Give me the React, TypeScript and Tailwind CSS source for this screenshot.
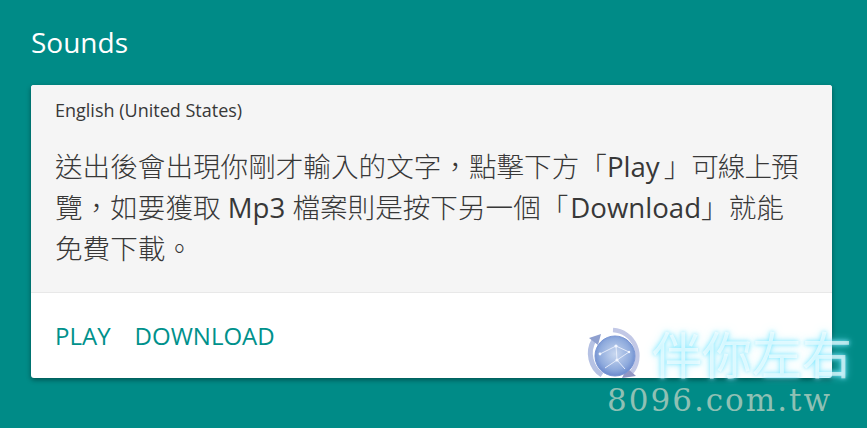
const OPEN = "font-['Open_Sans','Noto_Sans_CJK_TC',sans-serif]";

function Globe() {
  return (
    <svg width="56" height="56" viewBox="0 0 56 56" className="shrink-0">
      <defs>
        <radialGradient id="g" cx="0.5" cy="0.45" r="0.6">
          <stop offset="0" stopColor="#c9d8f0" />
          <stop offset="0.65" stopColor="#8fabdd" />
          <stop offset="1" stopColor="#5f7fc8" />
        </radialGradient>
      </defs>
      <path d="M28 3 A26 26 0 0 1 46 46" fill="none" stroke="#c2c8e6" strokeWidth="4.5" />
      <path d="M9 13 A26 26 0 0 0 17 48" fill="none" stroke="#a8b6de" strokeWidth="5" opacity="0.85" />
      <path d="M4 11 L16 7 L13 18 Z" fill="#8fa0cf" />
      <path d="M51 49 L37 51 L42 41 Z" fill="#9296c4" />
      <circle cx="30" cy="29" r="20" fill="url(#g)" stroke="#7a96d4" />
      <path d="M15 27 L31 19 L44 25 L32 33 L20 41 M31 19 L32 33 L40 42" fill="none" stroke="#eaf0fc" strokeWidth="1" opacity="0.9" />
      <circle cx="31" cy="19" r="1.6" fill="#f2f6ff" />
      <circle cx="32" cy="33" r="1.6" fill="#f2f6ff" />
      <circle cx="15" cy="27" r="1.4" fill="#f2f6ff" />
      <circle cx="44" cy="25" r="1.2" fill="#f2f6ff" />
    </svg>
  );
}

export default function App() {
  return (
    <div className={`relative h-[428px] w-[867px] overflow-hidden bg-[#008b87] ${OPEN}`}>
      <div className="px-[31px] pt-[24px]">
        <h1 className="text-[28px] leading-[36px] text-white">Sounds</h1>
        <div className="mt-[25px] w-[801px] overflow-hidden rounded-[3px] bg-white shadow-[0_2px_5px_rgba(0,0,0,0.4)]">
          <div className="h-[208px] border-b border-[#e8e8e8] bg-[#f5f5f5] px-[24px] pt-[13px] text-[#383838]">
            <p className="text-[18px] leading-[24px]">English (United States)</p>
            <p className="mt-[24px] text-[27.6px] font-light leading-[41px]">
              送出後會出現你剛才輸入的文字，點擊下方「<span className="pr-[4px] font-normal">Play</span>」<span className="tracking-[-1px]">可線上預</span>覽，如要獲取 <span className="font-normal">Mp3</span> 檔案則是按下另一個「<span className="pl-[2px] font-normal">Download</span>」就能免費下載。
            </p>
          </div>
          <div className="flex h-[85px] items-center gap-[24px] px-[24px] text-[24px] text-[#00918c]">
            <span>PLAY</span>
            <span>DOWNLOAD</span>
          </div>
        </div>
      </div>

      {/* site watermark over the card corner */}
      <div className="absolute left-[585px] top-[327px] flex w-[282px] flex-col">
        <div className="flex items-center gap-[11px]">
          <Globe />
          <span className="whitespace-nowrap text-[50px] leading-[56px] text-white/60 [text-shadow:0_0_4px_rgba(127,232,255,1),0_0_8px_rgba(127,232,255,0.6)]">
            伴你左右
          </span>
        </div>
        <span className="ml-[22px] whitespace-nowrap font-['DejaVu_Serif',serif] text-[31px] leading-[34px] tracking-[2px] text-[#8fc0b4]">
          8096.com.tw
        </span>
      </div>
    </div>
  );
}
